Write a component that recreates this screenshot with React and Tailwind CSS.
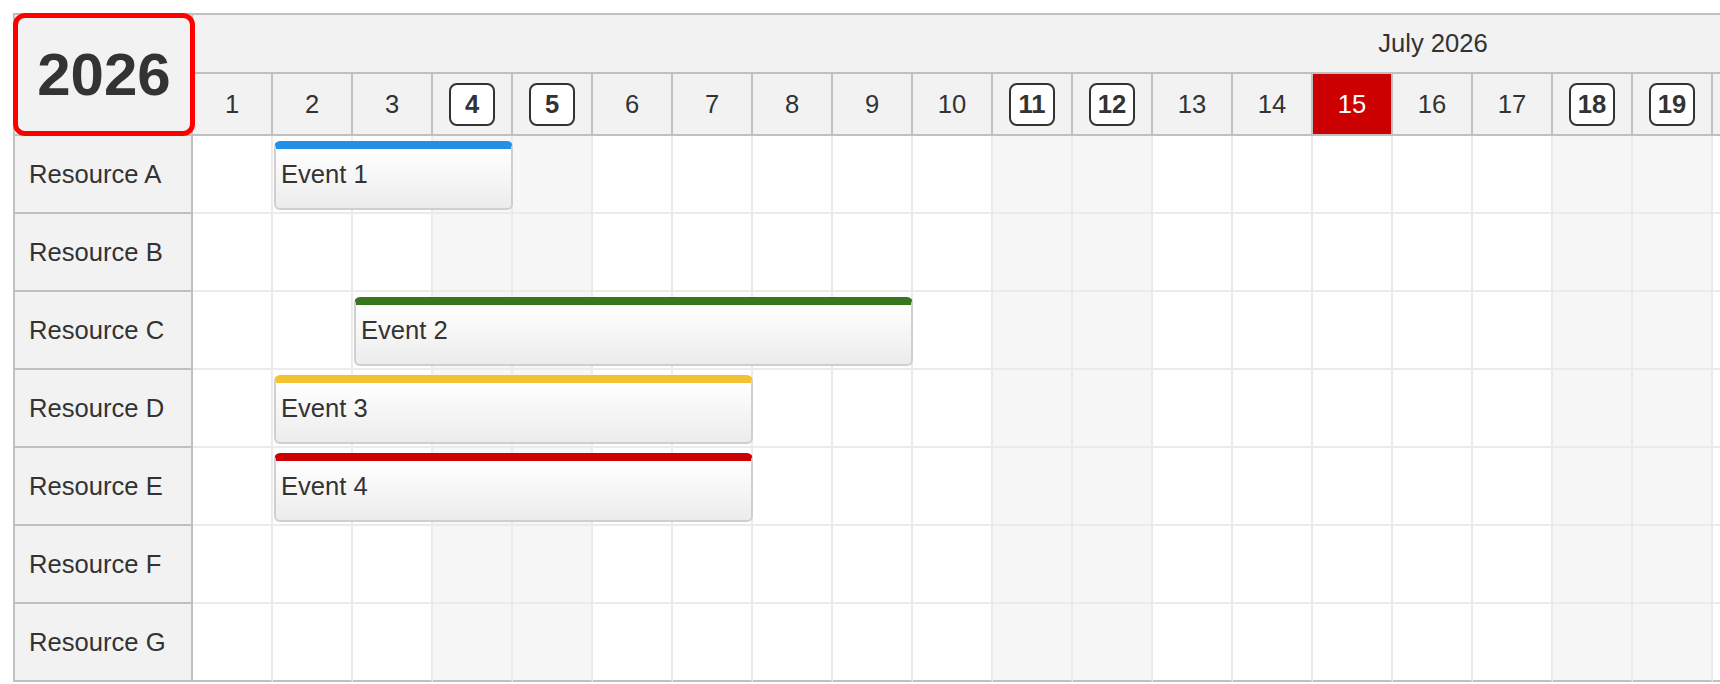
import React from 'react';

const DAYS = Array.from({ length: 31 }, (_, i) => i + 1);
const WEEKENDS = [4, 5, 11, 12, 18, 19, 25, 26];
const TODAY = 15;

const RESOURCES = ['Resource A', 'Resource B', 'Resource C', 'Resource D', 'Resource E', 'Resource F', 'Resource G'];

const EVENTS = [
  { id: 1, row: 0, start: 2, end: 4, text: 'Event 1', bar: 'border-t-[#2290e6]' },
  { id: 2, row: 2, start: 3, end: 9, text: 'Event 2', bar: 'border-t-[#38761d]' },
  { id: 3, row: 3, start: 2, end: 7, text: 'Event 3', bar: 'border-t-[#f1c232]' },
  { id: 4, row: 4, start: 2, end: 7, text: 'Event 4', bar: 'border-t-[#cc0000]' },
];

function DayHeader({ day }) {
  if (day === TODAY) {
    return (
      <div className="w-[80px] shrink-0 h-full border-r-2 border-[#c0c0c0] bg-[#cc0000] text-white flex items-center justify-center">
        {day}
      </div>
    );
  }
  return (
    <div className="w-[80px] shrink-0 h-full border-r-2 border-[#c0c0c0] flex items-center justify-center">
      {WEEKENDS.includes(day) ? (
        <span className="w-[46px] h-[43px] rounded-[8px] border-2 border-[#333] bg-white font-bold flex items-center justify-center">
          {day}
        </span>
      ) : (
        day
      )}
    </div>
  );
}

function Event({ ev }) {
  const left = (ev.start - 1) * 80 + 1;
  const width = (ev.end - ev.start + 1) * 80 - 1;
  return (
    <div
      className={`absolute top-[5px] h-[69px] rounded-[6px] border-2 border-[#cfcfcf] border-t-[8px] ${ev.bar} bg-linear-to-b from-white to-[#ececec] pl-[5px] pb-[8px] flex items-center`}
      style={{ left, width }}
    >
      {ev.text}
    </div>
  );
}

export default function App() {
  return (
    <div className="w-[1720px] h-[684px] overflow-hidden bg-white text-[#333] text-[25.6px] font-['Liberation_Sans',Arial,sans-serif]">
      <div className="pl-[13px] pt-[13px]">
        <div className="w-max flex border-l-2 border-t-2 border-[#c0c0c0]">
          {/* resource column */}
          <div className="w-[178px] shrink-0 flex flex-col bg-[#f2f2f2]">
            <div className="relative h-[121px] border-r-2 border-b-2 border-[#c0c0c0]">
              <div className="absolute -left-[2px] -top-[2px] w-[182px] h-[123px] z-10 rounded-[12px] border-[5px] border-[#ff0000] flex items-center justify-center">
                <span className="text-[60px] font-bold leading-none">2026</span>
              </div>
            </div>
            {RESOURCES.map((name) => (
              <div
                key={name}
                className="h-[78px] border-r-2 border-b-2 border-[#c0c0c0] pl-[14px] flex items-center"
              >
                {name}
              </div>
            ))}
          </div>

          {/* timeline */}
          <div className="flex flex-col">
            <div className="h-[59px] border-b-2 border-[#c0c0c0] bg-[#f2f2f2] flex items-center justify-center">
              July 2026
            </div>
            <div className="h-[62px] border-b-2 border-[#c0c0c0] bg-[#f2f2f2] flex">
              {DAYS.map((d) => (
                <DayHeader key={d} day={d} />
              ))}
            </div>
            {RESOURCES.map((name, r) => (
              <div key={name} className="relative h-[78px] flex">
                {DAYS.map((d) => (
                  <div
                    key={d}
                    className={`w-[80px] shrink-0 h-full border-r-2 border-r-[#ebebeb] border-b-2 ${
                      r === RESOURCES.length - 1 ? 'border-b-[#c0c0c0]' : 'border-b-[#ebebeb]'
                    } ${WEEKENDS.includes(d) ? 'bg-[#f7f7f7]' : 'bg-white'}`}
                  />
                ))}
                {EVENTS.filter((ev) => ev.row === r).map((ev) => (
                  <Event key={ev.id} ev={ev} />
                ))}
              </div>
            ))}
          </div>
        </div>
      </div>
    </div>
  );
}
